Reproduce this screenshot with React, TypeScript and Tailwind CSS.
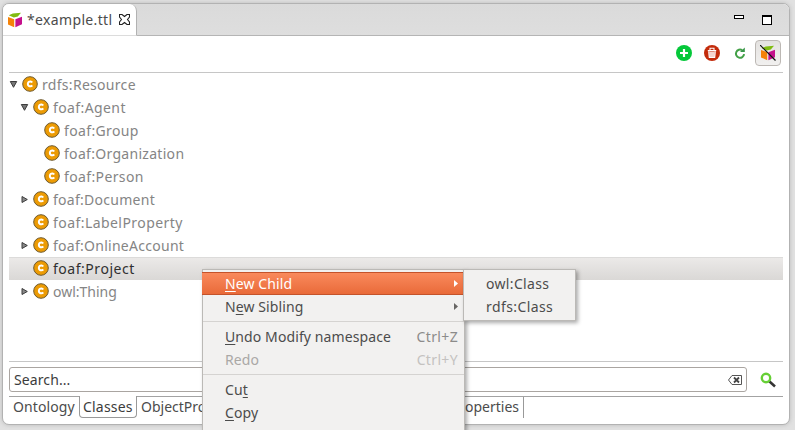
import type { ReactNode } from 'react';

type Node = { label: string; depth: number; arrow?: 'open' | 'closed'; track: string; selected?: boolean };

const nodes: Node[] = [
  { label: 'rdfs:Resource', depth: 0, arrow: 'open', track: 'tracking-[0.3px]' },
  { label: 'foaf:Agent', depth: 1, arrow: 'open', track: 'tracking-[0.4px]' },
  { label: 'foaf:Group', depth: 2, track: 'tracking-[0.37px]' },
  { label: 'foaf:Organization', depth: 2, track: 'tracking-[0.3px]' },
  { label: 'foaf:Person', depth: 2, track: 'tracking-[0.37px]' },
  { label: 'foaf:Document', depth: 1, arrow: 'closed', track: 'tracking-[0.27px]' },
  { label: 'foaf:LabelProperty', depth: 1, track: 'tracking-[0.44px]' },
  { label: 'foaf:OnlineAccount', depth: 1, arrow: 'closed', track: 'tracking-[0.27px]' },
  { label: 'foaf:Project', depth: 1, track: 'tracking-[0.53px]', selected: true },
  { label: 'owl:Thing', depth: 1, arrow: 'closed', track: 'tracking-normal' },
];

const indent = ['pl-0', 'pl-[11px]', 'pl-[22px]'];

function Cube({ slashed = false }: { slashed?: boolean }) {
  return (
    <svg width="16" height="16" viewBox="0 0 16 16" className="shrink-0">
      <path d="M1.8 3.2 L5.8 1.6 L14 .8 L10.8 4.4 L6.8 5.4 Z" fill="#80bc10" />
      <path d="M1 5 L7.2 7.2 V15.2 L1 12.4 Z" fill="#f58208" />
      <path d="M8.4 7.2 L15 4.8 V12.2 L8.4 15.2 Z" fill="#c5108c" />
      {slashed && <path d="M0 0 L15.5 15.5" stroke="#111" strokeWidth="1.2" />}
    </svg>
  );
}

function ClassIcon() {
  return (
    <svg width="16" height="16" viewBox="0 0 16 16" className="shrink-0">
      <circle cx="8" cy="8" r="7.3" fill="#ec9b04" stroke="#6e5a30" strokeWidth="1" />
      <path d="M10.2 6.5 A2.4 2.4 0 1 0 10.2 9.3" fill="none" stroke="#fff" strokeWidth="2" />
    </svg>
  );
}

function Arrow({ kind }: { kind?: 'open' | 'closed' }) {
  return (
    <svg width="9" height="9" viewBox="0 0 9 9" className="-mt-px shrink-0">
      {kind === 'open' && <path d="M1.3 1.5 H7.7 L4.5 7.3 Z" fill="#777" stroke="#3c3c3c" />}
      {kind === 'closed' && <path d="M2 1.5 V7.5 L7.3 4.5 Z" fill="#888" stroke="#3c3c3c" />}
    </svg>
  );
}

function MenuItem({ children, keys, sub, active, disabled, track = 'tracking-[0.1px]' }: { children: ReactNode; keys?: string; sub?: boolean; active?: boolean; disabled?: boolean; track?: string }) {
  const look = active
    ? '-ml-px pl-[23px] border-[#c4532b] bg-linear-to-b from-[#f98a5c] to-[#e96a39] text-white'
    : disabled
      ? 'pl-[22px] border-transparent text-[#aaa8a6]'
      : 'pl-[22px] border-transparent text-[#4c4c4c]';
  return (
    <div className={`flex h-[23px] shrink-0 items-center border-y pr-[6px] ${look}`}>
      <span className={`grow ${track}`}>{children}</span>
      {keys && <span className={`tracking-[0.35px] ${disabled ? 'text-[#c4c2c0]' : 'text-[#8c8b8a]'}`}>{keys}</span>}
      {sub && (
        <svg width="4" height="7" viewBox="0 0 4 7" className={active ? 'text-white' : 'text-[#686664]'}>
          <path d="M0 0 L4 3.5 L0 7 Z" fill="currentColor" />
        </svg>
      )}
    </div>
  );
}

const Key = ({ children }: { children: string }) => (
  <span className="underline decoration-1 underline-offset-[2px]">{children}</span>
);

const Separator = () => <div className="mt-[3px] mb-[3px] h-px shrink-0 bg-[#d5d3d1]" />;

export default function App() {
  return (
    <div className="relative h-[430px] w-[795px] overflow-hidden bg-[#e1e1e1] pt-[3px] pl-[2px] font-['Noto_Sans',sans-serif] text-[14px] leading-[22px] whitespace-nowrap text-[#4c4c4c]">
      <div className="flex h-[422px] w-[788px] flex-col overflow-hidden rounded-[7px] border border-[#b2b2b2] bg-white shadow-[0_0_4px_#bbb]">
        <div className="flex h-8 shrink-0 border-b border-[#b5b5b5] bg-linear-to-b from-[#dadada] to-[#dedede]">
          <div className="-mb-px flex h-8 w-[134px] items-center rounded-tr-[7px] border-r border-b border-r-[#b2b2b2] border-b-[#dcdcdc] bg-white pl-1">
            <Cube />
            <span className="ml-1 tracking-[0.35px]">*example.ttl</span>
            <svg width="11" height="11" viewBox="0 0 11 11" className="ml-[7px] shrink-0">
              <path d="M.5.5H3L5.5 2.5 8 .5H10.5V3L8.5 5.5 10.5 8V10.5H8L5.5 8.5 3 10.5H.5V8L2.5 5.5.5 3Z" fill="#fff" stroke="#222" strokeWidth="1.1" />
            </svg>
          </div>
          <div className="flex grow items-start justify-end gap-[18px] pt-[11px] pr-[17px]">
            <div className="h-1 w-[10px] border border-black bg-white" />
            <div className="h-[10px] w-[10px] border border-t-2 border-black bg-white" />
          </div>
        </div>
        <div className="mx-[6px] flex h-[37px] shrink-0 items-center justify-end border-b border-[#c6c6c6] pr-[2px] pb-[3px]">
          <svg width="16" height="16" viewBox="0 0 16 16">
            <circle cx="8" cy="8" r="8" fill="#05c83a" />
            <path d="M8 4V12M4 8H12" stroke="#fff" strokeWidth="2.2" />
          </svg>
          <svg width="16" height="16" viewBox="0 0 16 16" className="ml-3">
            <circle cx="8" cy="8" r="8" fill="#c32b0b" />
            <path d="M4.5 6.5H11.5L11 12.5H5Z" fill="#e9a093" />
            <path d="M3.8 5.6H12.2M6 5V3.3H10V5M4.8 6.5L5.3 12.5H10.7L11.2 6.5M7 7V12M9 7V12" fill="none" stroke="#fff" strokeWidth="1.1" />
          </svg>
          <svg width="16" height="16" viewBox="0 0 16 16" className="ml-3">
            <path d="M10.2 5.2 A4.1 4.1 0 1 0 12.1 9.2" fill="none" stroke="#43a047" strokeWidth="2" />
            <path d="M8 7 H12.8 V2.5 Z" fill="#39964a" />
          </svg>
          <div className="ml-[7px] flex size-[26px] items-center justify-center rounded-[4px] border border-[#bcb8b4] bg-linear-to-b from-[#e4e2e0] to-[#f1f0ef]">
            <Cube slashed />
          </div>
        </div>
        <div className="mx-[6px] h-[289px] shrink-0 border-b border-[#c6c6c6] text-[#858585]">
          {nodes.map((n) => (
            <div key={n.label} className={`flex h-[23px] items-center ${indent[n.depth]} ${n.selected ? 'bg-linear-to-b from-[#eceae9] to-[#dad8d6] text-[#303030] shadow-[inset_0_1px_#dcdbda]' : ''}`}>
              <Arrow kind={n.arrow} />
              <span className="-mt-px ml-[4px] flex"><ClassIcon /></span>
              <span className={`ml-1 ${n.track}`}>{n.label}</span>
            </div>
          ))}
        </div>
        <div className="mx-[6px] mt-[5px] flex h-[25px] shrink-0 items-center">
          <div className="flex h-[25px] w-[738px] items-center justify-between rounded-[3px] border border-[#aaa5a1] bg-white pr-[4px] pl-[4px] text-[#3c3c3c]">
            <span className="tracking-[0.1px]">Search...</span>
            <svg width="14" height="10" viewBox="0 0 14 10">
              <path d="M4 .5H13.5V9.5H4L.5 5Z" fill="#fff" stroke="#555" />
              <path d="M6 2.5L11 7.5M11 2.5L6 7.5" stroke="#444" strokeWidth="1.8" />
            </svg>
          </div>
          <svg width="16" height="16" viewBox="0 0 16 16" className="ml-[13px]">
            <path d="M9 9L15 14.5" stroke="#333" strokeWidth="2.5" />
            <circle cx="6" cy="6" r="4.2" fill="#fff" stroke="#66cf35" strokeWidth="2.4" />
          </svg>
        </div>
        <div className="mx-[6px] mt-1 flex h-[22px] shrink-0 border-t border-[#a3a3a3] leading-5">
          <div className="w-[70px] pl-1 tracking-[0.1px]">Ontology</div>
          <div className="-mt-px h-[22px] w-[58px] rounded-b-[4px] border border-t-0 border-[#999] bg-white pt-px pl-[3px] tracking-[0.2px] text-[#3c3c3c]">Classes</div>
          <div className="w-[65px] overflow-hidden pl-1">ObjectPro</div>
          <div className="ml-auto mr-[259px] h-[21px] w-[63px] border-r border-[#999] pr-[4px] text-right">operties</div>
        </div>
      </div>

      <div className="absolute top-[269px] left-[202px] flex h-[170px] w-[263px] flex-col border border-[#bbb9b6] bg-[#f2f1f0] pt-[2px] shadow-[2px_2px_4px_#0005]">
        <MenuItem active sub><Key>N</Key>ew Child</MenuItem>
        <MenuItem sub>N<Key>e</Key>w Sibling</MenuItem>
        <Separator />
        <MenuItem keys="Ctrl+Z"><Key>U</Key>ndo Modify namespace</MenuItem>
        <MenuItem disabled keys="Ctrl+Y">Redo</MenuItem>
        <Separator />
        <MenuItem>Cu<Key>t</Key></MenuItem>
        <MenuItem><Key>C</Key>opy</MenuItem>
      </div>
      <div className="absolute top-[269px] left-[463px] flex h-[52px] w-[113px] flex-col border border-[#bbb9b6] bg-[#f2f1f0] pt-[2px] shadow-[2px_2px_4px_#0005]">
        <MenuItem track="tracking-[0.33px]">owl:Class</MenuItem>
        <MenuItem track="tracking-[0.4px]">rdfs:Class</MenuItem>
      </div>
    </div>
  );
}
